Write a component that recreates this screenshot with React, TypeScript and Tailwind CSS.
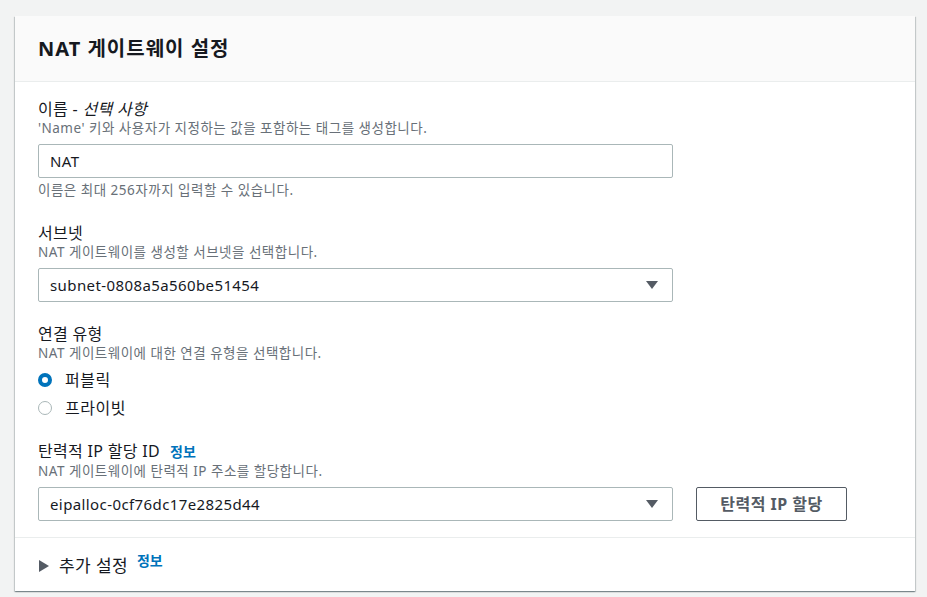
const Caret = () => (
    <svg width="14" height="10" viewBox="0 0 14 10" className="shrink-0">
        <path d="M1 1 L13 1 L7 9 Z" fill="#545b64" />
    </svg>
);

const Label = ({ children }: { children: React.ReactNode }) => (
    <div className="text-[16px] leading-[20px] tracking-[0.3px] text-[#16191f]">{children}</div>
);

const Desc = ({ children }: { children: React.ReactNode }) => (
    <div className="text-[13.5px] leading-[18px] tracking-[0.5px] text-[#687078]">{children}</div>
);

const SelectBox = ({ value }: { value: string }) => (
    <div className="flex h-[34px] w-[635px] items-center justify-between rounded-[2px] border border-[#aab7b8] bg-white pl-[11px] pr-[13px] text-[15px] tracking-[0.4px] text-[#16191f]">
        <span>{value}</span>
        <Caret />
    </div>
);

const Radio = ({ checked, label }: { checked: boolean; label: string }) => (
    <div className="flex h-[22px] items-center gap-[13px]">
        {checked ? (
            <span className="box-border h-[14px] w-[14px] rounded-full border-[4px] border-[#0073bb] bg-white" />
        ) : (
            <span className="box-border h-[14px] w-[14px] rounded-full border border-[#aab7b8] bg-white" />
        )}
        <span className="text-[16px] tracking-[0.5px] text-[#16191f]">{label}</span>
    </div>
);

export default function App() {
    return (
        <div
            className="min-h-[597px] bg-[#f2f3f3] pt-[16px] pl-[15px]"
            style={{ fontFamily: '"Noto Sans", "Noto Sans CJK KR", sans-serif' }}
        >
            <div className="w-[900px] bg-white shadow-[0_1px_1px_0_rgba(0,28,36,0.3),1px_1px_1px_0_rgba(0,28,36,0.15),-1px_1px_1px_0_rgba(0,28,36,0.15)]">
                {/* header */}
                <div className="flex h-[66px] items-center border-b border-[#eaeded] bg-[#fafafa] px-[23px]">
                    <h2 className="text-[20px] font-bold tracking-[1px] text-[#16191f]">NAT 게이트웨이 설정</h2>
                </div>

                {/* body */}
                <div className="border-b border-[#eaeded] px-[23px] pt-[17px] pb-[16px]">
                    <Label>
                        이름 - <i>선택 사항</i>
                    </Label>
                    <Desc>'Name' 키와 사용자가 지정하는 값을 포함하는 태그를 생성합니다.</Desc>
                    <input
                        type="text"
                        defaultValue="NAT"
                        className="mt-[7px] block h-[34px] w-[635px] rounded-[2px] border border-[#aab7b8] px-[11px] text-[15px] tracking-[0.4px] text-[#16191f] outline-none"
                    />
                    <div className="mt-[3px]">
                        <Desc>이름은 최대 256자까지 입력할 수 있습니다.</Desc>
                    </div>

                    <div className="mt-[24px]">
                        <Label>서브넷</Label>
                        <Desc>NAT 게이트웨이를 생성할 서브넷을 선택합니다.</Desc>
                        <div className="mt-[7px]">
                            <SelectBox value="subnet-0808a5a560be51454" />
                        </div>
                    </div>

                    <div className="mt-[22px]">
                        <Label>연결 유형</Label>
                        <Desc>NAT 게이트웨이에 대한 연결 유형을 선택합니다.</Desc>
                        <div className="mt-[7px] flex flex-col gap-[6px]">
                            <Radio checked label="퍼블릭" />
                            <Radio checked={false} label="프라이빗" />
                        </div>
                    </div>

                    <div className="mt-[22px]">
                        <Label>
                            탄력적 IP 할당 ID
                            <span className="ml-[10px] text-[14px] font-bold text-[#0073bb]">정보</span>
                        </Label>
                        <Desc>NAT 게이트웨이에 탄력적 IP 주소를 할당합니다.</Desc>
                        <div className="mt-[7px] flex items-center gap-[23px]">
                            <SelectBox value="eipalloc-0cf76dc17e2825d44" />
                            <button className="h-[34px] w-[151px] rounded-[2px] border border-[#545b64] bg-white text-[16px] font-bold tracking-[0.5px] text-[#545b64]">
                                탄력적 IP 할당
                            </button>
                        </div>
                    </div>
                </div>

                {/* footer */}
                <div className="flex h-[53px] items-center px-[24px]">
                    <svg width="10" height="12" viewBox="0 0 10 12" className="mt-[2px]">
                        <path d="M0 0 L10 6 L0 12 Z" fill="#545b64" />
                    </svg>
                    <span className="ml-[10px] mt-[2px] text-[17px] tracking-[0.4px] text-[#16191f]">추가 설정</span>
                    <span className="ml-[9px] -mt-[8px] text-[14px] font-bold text-[#0073bb]">정보</span>
                </div>
            </div>
        </div>
    );
}
